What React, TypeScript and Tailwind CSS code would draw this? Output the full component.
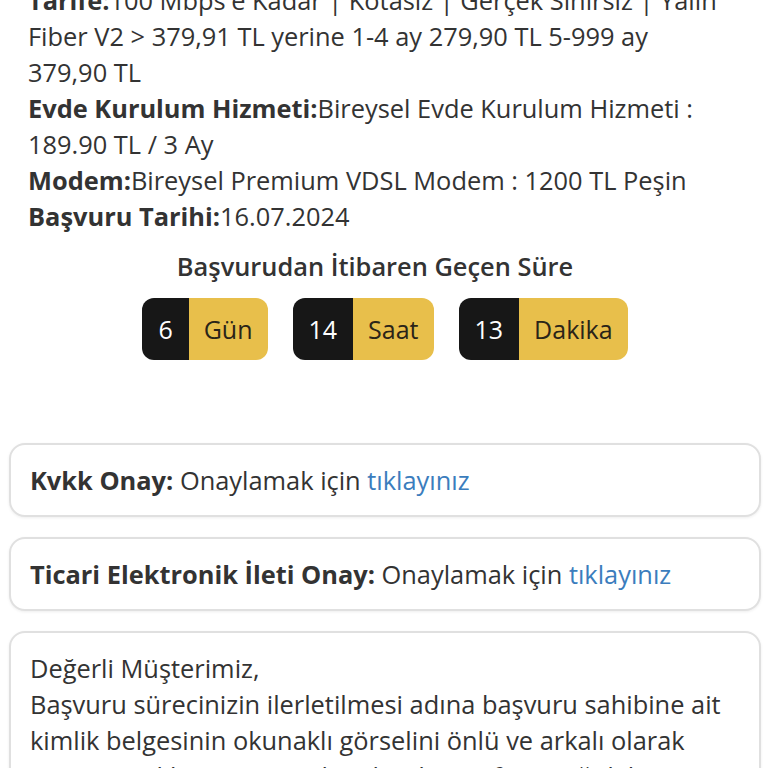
import React from "react";

const counters = [
  { value: "6", label: "Gün" },
  { value: "14", label: "Saat" },
  { value: "13", label: "Dakika" },
];

function InfoLine({ label, value }: { label: string; value: string }) {
  return (
    <p>
      <span className="font-bold">{label}</span>
      {value}
    </p>
  );
}

function ConsentCard({ title }: { title: string }) {
  return (
    <div className="rounded-[16px] border-2 border-[#e0e0e0] bg-white px-[19px] py-[17px] shadow-[0_1px_3px_rgba(0,0,0,0.07)]">
      <span className="font-bold">{title}</span> Onaylamak için{" "}
      <a className="text-[#3b7dbd]" href="#">
        tıklayınız
      </a>
    </div>
  );
}

export default function App() {
  return (
    <div className="min-h-screen overflow-hidden bg-white font-['Open_Sans',sans-serif] text-[25.4px] leading-[36px] text-[#333]">
      <div className="-mt-[18px] pl-[28px] pr-[44px]">
        <InfoLine
          label="Tarife:"
          value="100 Mbps'e Kadar | Kotasız | Gerçek Sınırsız | Yalın Fiber V2 > 379,91 TL yerine 1-4 ay 279,90 TL 5-999 ay 379,90 TL"
        />
        <InfoLine label="Evde Kurulum Hizmeti:" value="Bireysel Evde Kurulum Hizmeti : 189.90 TL / 3 Ay" />
        <InfoLine label="Modem:" value="Bireysel Premium VDSL Modem : 1200 TL Peşin" />
        <InfoLine label="Başvuru Tarihi:" value="16.07.2024" />
      </div>

      <h3 className="mt-[14px] pr-[18px] text-center font-semibold">Başvurudan İtibaren Geçen Süre</h3>

      <div className="mt-[14px] flex justify-center gap-[25px] pl-[2px] text-[25px]">
        {counters.map((c) => (
          <div key={c.label} className="flex h-[62px] overflow-hidden rounded-[12px]">
            <span className="flex items-center bg-[#171717] px-[16px] text-white">{c.value}</span>
            <span className="flex items-center bg-[#e8bf4b] px-[15px] text-[#2a2418]">{c.label}</span>
          </div>
        ))}
      </div>

      <div className="mt-[83px] flex flex-col gap-[20px] pl-[9px] pr-[7px]">
        <ConsentCard title="Kvkk Onay:" />
        <ConsentCard title="Ticari Elektronik İleti Onay:" />
        <div className="rounded-[16px] border-2 border-[#e0e0e0] bg-white px-[19px] pt-[17px] pb-[20px] shadow-[0_1px_3px_rgba(0,0,0,0.07)]">
          <p>Değerli Müşterimiz,</p>
          <p>
            Başvuru sürecinizin ilerletilmesi adına başvuru sahibine ait kimlik belgesinin okunaklı görselini önlü ve
            arkalı olarak sisteme yüklemeniz gerekmektedir. Lütfen aşağıdaki alandan yükleme yapınız.
          </p>
        </div>
      </div>
    </div>
  );
}
